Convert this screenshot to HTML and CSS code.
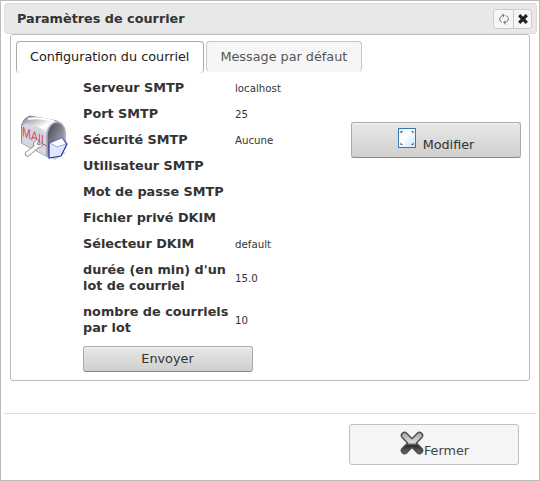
FILE: index.html
```
<!DOCTYPE html>
<html lang="fr">
<head>
  <meta charset="UTF-8">
  <title>Paramètres de courrier</title>
  <link rel="stylesheet" href="styles.css">
</head>
<body>
  <div class="dialog">
    <div class="titlebar">
      <span class="title">Paramètres de courrier</span>
      <div class="title-buttons">
        <button class="refresh" title="Actualiser">
          <svg width="12" height="12" viewBox="0 0 12 12" fill="none" stroke="#777">
            <path d="M6 2.5H4L1.8 5v2.5L4 9.5M4.3 .5l2 2-2 2M6 9.5h2L10.2 7V4.5L8 2.5M7.7 11.5l-2-2 2-2"/>
          </svg>
        </button>
        <button class="close" title="Fermer">
          <svg width="10" height="10" viewBox="0 0 10 10" stroke="#222" stroke-width="3.2">
            <path d="M1.2 1.2l7.6 7.6M8.8 1.2L1.2 8.8"/>
          </svg>
        </button>
      </div>
    </div>

    <div class="tabs">
      <div class="tab-list">
        <a class="tab active">Configuration du courriel</a>
        <a class="tab">Message par défaut</a>
      </div>
      <div class="panel">
        <svg class="mail-icon" width="50" height="48" viewBox="0 0 50 48">
          <defs>
            <linearGradient id="roof" x1="0" y1="0" x2=".5" y2="1">
              <stop offset="0" stop-color="#777884"/>
              <stop offset=".4" stop-color="#fff"/>
              <stop offset="1" stop-color="#8d8ea0"/>
            </linearGradient>
            <linearGradient id="door" x1="0" y1="0" x2="1" y2="1">
              <stop offset="0" stop-color="#3f3f4a"/>
              <stop offset="1" stop-color="#c9c9d8"/>
            </linearGradient>
          </defs>
          <path d="M13 36l22 10 11-7-8-6z" fill="#aaa" opacity=".5"/>
          <path d="M1.5 29V12Q3 4 10 2L33 6Q44 8 45 18V32L28 43z" fill="url(#roof)" stroke="#8c8c9a"/>
          <path d="M2 13Q5 7 11 11Q24 13 26 22V42L2 29z" fill="#d6d6e2"/>
          <path d="M27 42V20Q29 9 37 8Q44 9 45 18V34z" fill="url(#door)" stroke="#a9a9b8" stroke-width="1.5"/>
          <path d="M8 5Q20 3 34 7" fill="none" stroke="#fff" stroke-width="2"/>
          <text class="mail-text" transform="matrix(1 .42 0 1 2 22)" textLength="25" lengthAdjust="spacingAndGlyphs">MAIL</text>
          <path d="M29 29l13-5 5 6-6 12-12 2z" fill="#dfe7ff" stroke="#2937a5" stroke-width="1.2"/>
          <path d="M30 29l12-5 4 6-9 3z" fill="#fff" stroke="#8290d2" stroke-width=".8"/>
          <path d="M14 28q2-3 5-2l-2 4 3 1 2-3q2 5-4 6l-8 7q-2 2-4 1-2-2 0-4l8-6q-1-2 0-4z" fill="#f8f8f8" stroke="#777" stroke-width=".8"/>
        </svg>
        <table class="config">
          <tr><th>Serveur SMTP</th><td>localhost</td></tr>
          <tr><th>Port SMTP</th><td>25</td></tr>
          <tr><th>Sécurité SMTP</th><td>Aucune</td></tr>
          <tr><th>Utilisateur SMTP</th><td></td></tr>
          <tr><th>Mot de passe SMTP</th><td></td></tr>
          <tr><th>Fichier privé DKIM</th><td></td></tr>
          <tr><th>Sélecteur DKIM</th><td>default</td></tr>
          <tr><th>durée (en min) d'un<br>lot de courriel</th><td>15.0</td></tr>
          <tr><th>nombre de courriels<br>par lot</th><td>10</td></tr>
          <tr><td class="send" colspan="2"><button class="btn">Envoyer</button></td></tr>
        </table>
        <button class="btn edit">
          <svg width="18" height="20" viewBox="0 0 18 20">
            <defs>
              <linearGradient id="sheet" x1="0" y1="0" x2="1" y2="1">
                <stop offset="0" stop-color="#d8edff"/>
                <stop offset=".4" stop-color="#fff"/>
                <stop offset="1" stop-color="#c7e5ff"/>
              </linearGradient>
            </defs>
            <rect x=".5" y=".5" width="17" height="19" fill="url(#sheet)" stroke="#3f78ae"/>
            <path d="M2.5 3H5L2.5 5.500zM15.500 3H13l2.500 2.500zM2.500 17H5l-2.500-2.500zM15.500 17H13l2.500-2.500z" fill="#3d5f85"/>
          </svg>
          <span>Modifier</span>
        </button>
      </div>
    </div>

    <div class="footer">
      <button class="btn-close">
        <svg width="24" height="24" viewBox="0 0 24 24">
          <defs>
            <linearGradient id="cross" x1="0" y1="0" x2="0" y2="24" gradientUnits="userSpaceOnUse">
              <stop offset="0" stop-color="#999"/>
              <stop offset=".48" stop-color="#ddd"/>
              <stop offset=".6" stop-color="#2c2c2c"/>
              <stop offset="1" stop-color="#777"/>
            </linearGradient>
          </defs>
          <g fill="none" stroke-linecap="round">
            <path d="M4.500 4.500l15 15M19.500 4.500l-15 15" stroke="#4c4c4c" stroke-width="7.500"/>
            <path d="M4.500 4.500l15 15M19.500 4.500l-15 15" stroke="url(#cross)" stroke-width="4.600"/>
          </g>
        </svg>
        <span>Fermer</span>
      </button>
    </div>
  </div>
</body>
</html>
```
FILE: styles.css
```
* {
  box-sizing: border-box;
}
body {
  margin: 0;
  background: #fff;
  color: #333;
  font-family: "DejaVu Sans", sans-serif;
  font-size: 12.8px;
}
button {
  margin: 0;
  padding: 0;
  font-family: inherit;
  font-size: 12.8px;
}
svg {
  display: block;
  flex: none;
}
.dialog {
  height: 481px;
  padding: 2px;
  border: 1px solid #bbb;
}
.titlebar {
  display: flex;
  align-items: center;
  justify-content: space-between;
  height: 31px;
  margin: 0 0 0 1px;
  padding: 0 4px 0 12px;
  border: 1px solid #ddd;
  border-radius: 3px;
  background: #e8e8e8;
}
.title {
  font-weight: bold;
}
.title-buttons {
  display: flex;
}
.title-buttons button {
  display: flex;
  align-items: center;
  justify-content: center;
  width: 20px;
  height: 20px;
  border: 1px solid #ccc;
  background: #f6f6f6;
}
.title-buttons .refresh {
  width: 21px;
  border-radius: 3px 0 0 3px;
}
.title-buttons .close {
  width: 19px;
  margin-left: -1px;
  border-radius: 0 3px 3px 0;
}
.tabs {
  height: 347px;
  margin: 0 7px;
  padding: 6px 5px;
  border: 1px solid #bbb;
  border-radius: 3px;
}
.tab-list {
  display: flex;
  align-items: flex-start;
  gap: 2px;
  height: 34px;
}
.tab {
  height: 31px;
  padding: 0 14px 0 13px;
  border: 1px solid #c5c5c5;
  border-bottom: 0;
  border-radius: 4px;
  background: #f6f6f6;
  color: #555;
  line-height: 30px;
  white-space: nowrap;
}
.tab.active {
  height: 32px;
  border-color: #aaa;
  background: #fff;
  color: #212121;
}
.panel {
  display: flex;
  align-items: flex-start;
}
.mail-icon {
  margin: 39px 13px 0 4px;
}
.mail-text {
  fill: #d94450;
  font-family: "Liberation Sans", sans-serif;
  font-size: 14px;
}
.config {
  width: 269px;
  border-collapse: collapse;
}
.config th {
  width: 152px;
  height: 26px;
  padding: 5px 0;
  line-height: 16px;
  text-align: left;
  white-space: nowrap;
}
.config td {
  padding: 0;
  font-size: 10.24px;
}
.config .send {
  padding-top: 5px;
}
.btn {
  display: block;
  width: 170px;
  height: 26px;
  padding: 0 1px 2px 0;
  border: 1px solid #aaa;
  border-bottom-color: #888;
  border-radius: 3px;
  background: linear-gradient(#e8e8e6, #cfcfcd);
  box-shadow: inset 0 1px #f7f7f7;
  color: #333;
}
.btn.edit {
  display: flex;
  justify-content: center;
  gap: 7px;
  height: 36px;
  margin-top: 47px;
  margin-left: -1px;
  padding: 5px 0 0;
}
.edit span {
  margin-top: 9px;
}
.footer {
  display: flex;
  justify-content: flex-end;
  margin-top: 32px;
  margin-left: 1px;
  padding: 10px 18px 0 0;
  border-top: 1px solid #ddd;
}
.btn-close {
  display: flex;
  justify-content: center;
  width: 170px;
  height: 41px;
  padding: 6px 0 0 1px;
  border: 1px solid #c0c0c0;
  border-radius: 3px;
  background: #f5f5f5;
  color: #444;
}
.btn-close span {
  margin-top: 12px;
}
```
